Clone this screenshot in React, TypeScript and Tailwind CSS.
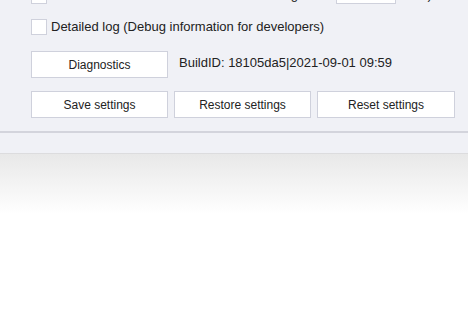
import React from 'react';

const font = { fontFamily: '"Liberation Sans", Arial, sans-serif' };

function Checkbox() {
    return <span className="block w-[16px] h-[16px] shrink-0 border border-[#cfd1dc] bg-white" />;
}

function Btn({ label, className = '' }: { label: string; className?: string }) {
    return (
        <button className={`h-[27px] border border-[#cfd1dc] bg-white text-[12px] text-[#222] ${className}`}>
            {label}
        </button>
    );
}

export default function App() {
    return (
        <div className="w-[468px] h-[336px] overflow-hidden bg-white" style={font}>
            <div className="bg-[#f0f1f6] h-[133px] overflow-hidden border-b-2 border-[#d3d4dc]">
                {/* row cut off by the top edge */}
                <div className="flex items-end h-[22px] -mt-[18px] pl-[31px] text-[13px] text-[#222] whitespace-nowrap">
                    <Checkbox />
                    <span className="shrink-0 ml-[4px] w-[247px] text-right leading-[16px] pb-px">Maximum size of the log</span>
                    <span className="shrink-0 ml-[38px] w-[60px] h-[22px] border border-[#cfd1dc] bg-white" />
                    <span className="shrink-0 ml-[12px] leading-[16px] pb-px">MB)</span>
                </div>
                <label className="flex items-center gap-[4px] mt-[15px] pl-[31px] text-[13px] text-[#222]">
                    <Checkbox />
                    <span className="leading-[16px]">Detailed log (Debug information for developers)</span>
                </label>
                <div className="flex items-center mt-[16px] pl-[31px]">
                    <Btn label="Diagnostics" className="w-[137px]" />
                    <span className="ml-[11px] -mt-[3px] text-[13px] text-[#222]">BuildID: 18105da5|2021-09-01 09:59</span>
                </div>
                <div className="flex gap-[6px] mt-[13px] pl-[31px]">
                    <Btn label="Save settings" className="w-[137px]" />
                    <Btn label="Restore settings" className="w-[137px]" />
                    <Btn label="Reset settings" className="w-[138px]" />
                </div>
            </div>
            <div className="h-[21px] bg-[#f0f1f6] border-b border-[#dcdcde]" />
            <div className="h-[60px] bg-gradient-to-b from-[#e8e8e8] to-white" />
        </div>
    );
}
